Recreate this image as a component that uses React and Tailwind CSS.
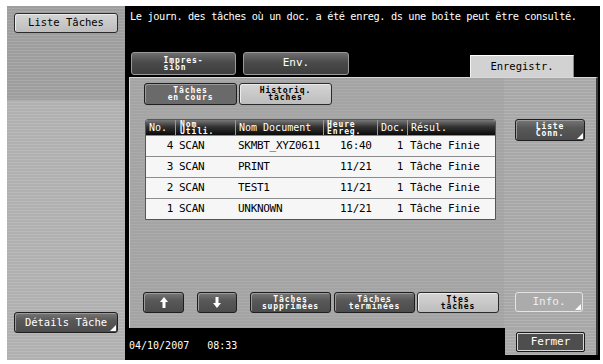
import clsx from 'clsx'

const rows = [
    { no: 4, user: 'SCAN', doc: 'SKMBT_XYZ0611', time: '16:40', n: 1, res: 'Tâche Finie' },
    { no: 3, user: 'SCAN', doc: 'PRINT', time: '11/21', n: 1, res: 'Tâche Finie' },
    { no: 2, user: 'SCAN', doc: 'TEST1', time: '11/21', n: 1, res: 'Tâche Finie' },
    { no: 1, user: 'SCAN', doc: 'UNKNOWN', time: '11/21', n: 1, res: 'Tâche Finie' },
]

const Corner = ({ color = 'border-b-white' }) => (
    <span className={clsx('absolute bottom-[1px] right-[1px] h-0 w-0 border-b-[6px] border-l-[6px] border-l-transparent', color)} />
)

// tiny two-line label used on the copier panel
const Tiny = ({ children, className }) => (
    <span className={clsx('whitespace-pre text-center text-[8px] font-bold leading-[7px] tracking-[0.9px]', className)}>{children}</span>
)

const darkBtn =
    'relative flex items-center justify-center rounded-[3px] border border-[#1e1e1e] bg-[linear-gradient(180deg,#767676,#585858_40%,#4c4c4c)] text-white shadow-[inset_1px_1px_0_#9a9a9a]'
const lightBtn =
    'relative flex items-center justify-center rounded-[3px] border border-[#2a2a2a] bg-[linear-gradient(180deg,#d4d4d4,#bdbdbd)] text-black shadow-[inset_1px_1px_0_#ececec]'

const Arrow = ({ down }) => (
    <svg width="8" height="11" viewBox="0 0 8 11" className={clsx(down && 'rotate-180')}>
        <polygon points="4,0 8,5 5.5,5 5.5,11 2.5,11 2.5,5 0,5" fill="white" />
    </svg>
)

export default function App() {
    return (
        <div className="h-[364px] w-[603px] bg-white pl-[7px] pt-[6px] font-['DejaVu_Sans_Mono','Liberation_Mono',monospace]">
            <div className="flex h-[354px] w-[593px]">
                {/* left column */}
                <div className="flex w-[119px] flex-col">
                    <div className="h-[94px] bg-[image:repeating-linear-gradient(180deg,#9e9e9e_0px,#9e9e9e_2px,#a9a9a9_2px,#a9a9a9_3px)] px-[7px] pt-[7px]">
                        <div className={clsx(lightBtn, 'h-[20px] text-[10.5px]')}>Liste Tâches</div>
                    </div>
                    <div className="flex flex-1 flex-col justify-end bg-[image:repeating-linear-gradient(180deg,#b0b0b0_0px,#b0b0b0_2px,#bababa_2px,#bababa_3px)] px-[7px] pb-[27px]">
                        <div className={clsx(darkBtn, 'h-[21px] text-[10.5px]')}>
                            Détails Tâche
                            <Corner />
                        </div>
                    </div>
                </div>

                {/* black screen area */}
                <div className="flex flex-1 flex-col bg-black">
                    <div className="h-[45px] pl-[5px] pt-[4px] text-[10.3px] leading-[13px] tracking-[-0.4px] text-white">
                        Le journ. des tâches où un doc. a été enreg. ds une boîte peut être consulté.
                    </div>

                    {/* tabs */}
                    <div className="flex h-[26px] items-start pl-[6px]">
                        <div className="mt-[1px] flex h-[23px] w-[105px] items-center justify-center rounded-[3px] border border-[#9a9a9a] bg-[linear-gradient(180deg,#6e6e6e,#4a4a4a_45%,#3e3e3e)] text-white">
                            <Tiny className="text-left">{'Impres-\nsion'}</Tiny>
                        </div>
                        <div className="ml-[7px] mt-[1px] flex h-[23px] w-[106px] items-center justify-center rounded-[3px] border border-[#9a9a9a] bg-[linear-gradient(180deg,#6e6e6e,#4a4a4a_45%,#3e3e3e)] text-[11px] text-white">
                            Env.
                        </div>
                        <div className="ml-[121px] mt-[4px] flex h-[22px] w-[104px] items-center justify-center border-l border-r border-t border-l-[#f2f2f2] border-r-[#888] border-t-white bg-[#d2d2d2] text-[10.5px] text-black">
                            Enregistr.
                        </div>
                    </div>

                    {/* main panel */}
                    <div className="ml-[4px] mr-[2px] flex h-[251px] border-l border-t border-l-[#d8d8d8] border-t-[#d8d8d8] border-r-2 border-r-[#3a3a3a]">
                        <div className="flex w-[374px] flex-col bg-[image:repeating-linear-gradient(180deg,#a4a4a4_0px,#a4a4a4_2px,#ababab_2px,#ababab_3px)] pl-[13px]">
                            <div className="mt-[5px] flex gap-[2px] pl-[1px]">
                                <div className={clsx(darkBtn, 'h-[22px] w-[93px] bg-none bg-[#6a6a6a]')}>
                                    <Tiny>{'Tâches\nen cours'}</Tiny>
                                </div>
                                <div className={clsx(lightBtn, 'h-[22px] w-[93px]')}>
                                    <Tiny>{'Historiq.\ntâches'}</Tiny>
                                </div>
                            </div>

                            {/* job table */}
                            <div className="ml-[2px] mt-[14px] w-[351px] overflow-hidden rounded-t-[3px] border border-[#555] bg-[#f6f6f6]">
                                <div className="flex h-[15px] items-center bg-[linear-gradient(180deg,#777,#333_45%,#0a0a0a)] text-white">
                                    <div className="w-[29px] pl-[3px] text-[10px]">No.</div>
                                    <div className="flex h-full w-[60px] items-center border-l border-[#999] pl-[4px]">
                                        <Tiny className="text-left text-[7px] leading-[6px] tracking-[0.6px]">{'Nom\nUtili.'}</Tiny>
                                    </div>
                                    <div className="flex h-full w-[88px] items-center border-l border-[#999] pl-[3px] text-[10px]">Nom Document</div>
                                    <div className="flex h-full w-[54px] items-center border-l border-[#999] pl-[3px]">
                                        <Tiny className="text-left text-[7px] leading-[6px] tracking-[0.6px]">{'Heure\nEnreg.'}</Tiny>
                                    </div>
                                    <div className="flex h-full w-[30px] items-center border-l border-[#999] pl-[3px] text-[10px]">Doc.</div>
                                    <div className="flex h-full flex-1 items-center border-l border-[#999] pl-[3px] text-[10px]">Résul.</div>
                                </div>
                                {rows.map((r) => (
                                    <div key={r.no} className="flex h-[21px] items-center border-t border-[#8c8c8c] text-[11px] tracking-[-0.3px] text-black first:border-t-0">
                                        <div className="w-[29px] pr-[2px] text-right">{r.no}</div>
                                        <div className="w-[60px] pl-[4px]">{r.user}</div>
                                        <div className="w-[88px] pl-[3px]">{r.doc}</div>
                                        <div className="w-[54px] pl-[17px]">{r.time}</div>
                                        <div className="w-[30px] pr-[4px] text-right">{r.n}</div>
                                        <div className="flex-1 pl-[3px]">{r.res}</div>
                                    </div>
                                ))}
                            </div>

                            <div className="mt-auto mb-[15px] flex items-center">
                                <div className={clsx(darkBtn, 'h-[21px] w-[41px]')}>
                                    <Arrow />
                                </div>
                                <div className={clsx(darkBtn, 'ml-[13px] h-[21px] w-[40px]')}>
                                    <Arrow down />
                                </div>
                                <div className={clsx(darkBtn, 'ml-[13px] h-[21px] w-[81px]')}>
                                    <Tiny>{'Tâches\nsupprimées'}</Tiny>
                                </div>
                                <div className={clsx(darkBtn, 'ml-[3px] h-[21px] w-[81px]')}>
                                    <Tiny>{'Tâches\nterminées'}</Tiny>
                                </div>
                                <div className={clsx(lightBtn, 'ml-[2px] h-[21px] w-[82px]')}>
                                    <Tiny>{'Ttes\ntâches'}</Tiny>
                                </div>
                            </div>
                        </div>

                        {/* right column */}
                        <div className="flex flex-1 flex-col bg-[image:repeating-linear-gradient(180deg,#a8a8a8_0px,#a8a8a8_2px,#b3b3b3_2px,#b3b3b3_3px)] px-[11px]">
                            <div className={clsx(darkBtn, 'mt-[41px] h-[22px] w-[70px]')}>
                                <Tiny>{'Liste\nConn.'}</Tiny>
                                <Corner />
                            </div>
                            <div className="relative mb-[16px] mt-auto flex h-[20px] w-[68px] items-center justify-center rounded-[3px] border border-[#e4e4e4] bg-[#ababab] text-[11px] text-[#eeeeee]">
                                Info.
                                <Corner />
                            </div>
                        </div>
                    </div>

                    {/* bottom status bar */}
                    <div className="flex flex-1 items-start">
                        <div className="flex flex-1 gap-[18px] pl-[4px] pt-[10px] text-[10px] text-white">
                            <span>04/10/2007</span>
                            <span>08:33</span>
                        </div>
                        <div className="mr-[2px] h-[27px] w-[93px] border-r-2 border-r-[#3a3a3a] bg-[image:repeating-linear-gradient(180deg,#a8a8a8_0px,#a8a8a8_2px,#b3b3b3_2px,#b3b3b3_3px)] px-[11px] pt-[4px]">
                            <div className="flex h-[20px] w-[69px] items-center justify-center rounded-[2px] border border-[#1a1a1a] bg-[#4e4e4e] text-[11px] text-white shadow-[inset_0_0_0_1px_#d8d8d8]">
                                Fermer
                            </div>
                        </div>
                    </div>
                </div>
            </div>
        </div>
    )
}
